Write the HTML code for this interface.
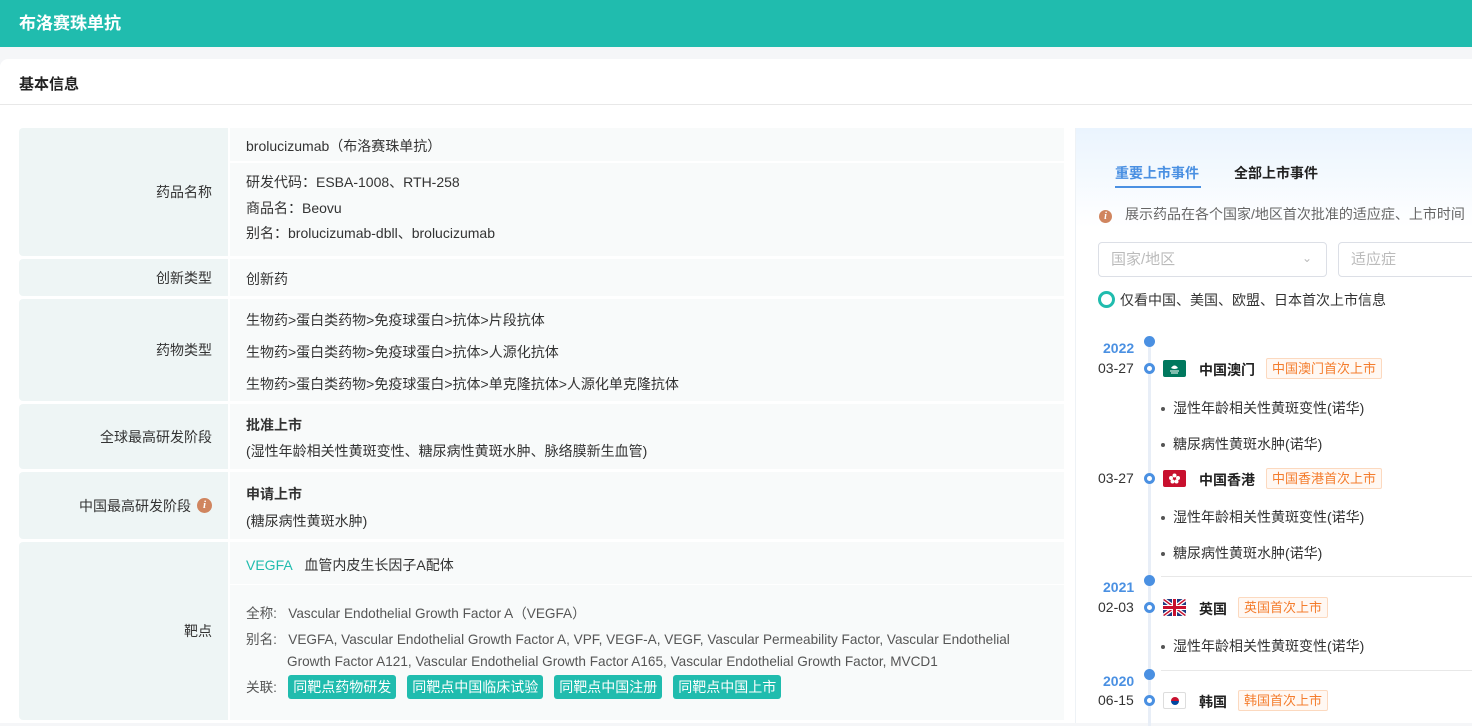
<!DOCTYPE html>
<html><head><meta charset="utf-8"><style>
*{margin:0;padding:0;box-sizing:border-box}
body{width:1472px;height:723px;overflow:hidden;background:#f5f6f8;font-family:"Liberation Sans","Noto Sans CJK SC",sans-serif;font-size:14px;color:#333;position:relative}
.hd{position:absolute;left:0;top:0;width:1472px;height:47px;background:#20bcae;color:#fff;font-weight:bold;font-size:17px;line-height:47px;padding-left:19px}
.card{position:absolute;left:0;top:59px;width:1472px;height:664px;background:#fff;border-radius:8px 0 0 0}
.st{position:absolute;left:19px;top:14px;font-weight:bold;font-size:15px;color:#222}
.ln{position:absolute;left:0;top:45px;width:1472px;height:1px;background:#e8e8e8}
.row{position:absolute;left:19px;width:1045px}
.lb{position:absolute;left:0;top:0;bottom:0;width:209px;background:#eef5f5;border-radius:4px 0 0 4px;text-align:right;padding-right:16px;display:flex;align-items:center;justify-content:flex-end;font-size:14px;color:#333}
.vl{position:absolute;left:211px;right:0;top:0;bottom:0;background:#f8fafa;padding-left:16px}
.t{position:absolute;left:16px;white-space:nowrap}
.sep{position:absolute;left:0;right:0;height:2px;background:#fff}
.info{display:inline-block;width:15px;height:15px;border-radius:50%;background:#d0855f;color:#fff;font-size:11px;font-style:italic;font-family:"Liberation Serif",serif;font-weight:bold;text-align:center;line-height:15px;margin-left:6px}
.tag{display:inline-block;background:#20bcae;color:#fff;border-radius:3px;padding:0 5px;height:24px;line-height:24px;margin-right:11px;font-size:14px}
.gray{color:#555;font-size:13.6px}
.rp{position:absolute;left:1075px;top:128px;width:397px;height:595px;background:linear-gradient(#eaf4fe,#fff 100px);border-left:1px solid #eef2f6}
.rp .a{position:absolute;white-space:nowrap}
.sel{position:absolute;height:35px;border:1px solid #dcdfe6;border-radius:4px;background:#fff;color:#bbb;font-size:15px;line-height:33px;padding-left:12px}
.vline{position:absolute;left:72px;top:218px;width:3px;height:380px;background:#e8eef7}
.dot{position:absolute;width:11px;height:11px;border-radius:50%;background:#4a90e2}
.odot{position:absolute;width:11px;height:11px;border-radius:50%;border:3px solid #4a90e2;background:#fff}
.yr{position:absolute;color:#4a90e2;font-weight:bold;font-size:14px}
.dt{position:absolute;font-size:14px;color:#333}
.cn{position:absolute;font-weight:bold;font-size:14px;color:#222}
.bd{position:absolute;border:1px solid #fcd9bf;background:#fff8f3;color:#f47c2c;font-size:13px;padding:0 5px;height:21px;line-height:19px;border-radius:2px}
.ind{position:absolute;font-size:14px;color:#333;white-space:nowrap}
.ind:before{content:"";display:inline-block;width:4px;height:4px;border-radius:50%;background:#555;margin-right:8px;vertical-align:middle}
.hr{position:absolute;left:85px;right:0;height:1px;background:#e8e8e8}
.flag{position:absolute;width:23px;height:17px;border-radius:2px;overflow:hidden}
</style></head><body>
<div class="hd">布洛赛珠单抗</div>
<div class="card">
<div class="st">基本信息</div>
<div class="ln"></div>
</div>

<div class="row" style="top:128px;height:128px"><div class="lb">药品名称</div><div class="vl">
<div class="t" style="top:8px">brolucizumab（布洛赛珠单抗）</div>
<div class="sep" style="top:33px"></div>
<div class="t" style="top:44px">研发代码：ESBA-1008、RTH-258</div>
<div class="t" style="top:70px">商品名：Beovu</div>
<div class="t" style="top:95px">别名：brolucizumab-dbll、brolucizumab</div>
</div></div>

<div class="row" style="top:259px;height:37px"><div class="lb">创新类型</div><div class="vl"><div class="t" style="top:10px">创新药</div></div></div>

<div class="row" style="top:299px;height:102px"><div class="lb">药物类型</div><div class="vl">
<div class="t" style="top:11px">生物药&gt;蛋白类药物&gt;免疫球蛋白&gt;抗体&gt;片段抗体</div>
<div class="t" style="top:43px">生物药&gt;蛋白类药物&gt;免疫球蛋白&gt;抗体&gt;人源化抗体</div>
<div class="t" style="top:75px">生物药&gt;蛋白类药物&gt;免疫球蛋白&gt;抗体&gt;单克隆抗体&gt;人源化单克隆抗体</div>
</div></div>

<div class="row" style="top:404px;height:65px"><div class="lb">全球最高研发阶段</div><div class="vl">
<div class="t" style="top:11px;font-weight:bold">批准上市</div>
<div class="t" style="top:37px">(湿性年龄相关性黄斑变性、糖尿病性黄斑水肿、脉络膜新生血管)</div>
</div></div>

<div class="row" style="top:472px;height:67px"><div class="lb">中国最高研发阶段<span class="info">i</span></div><div class="vl">
<div class="t" style="top:12px;font-weight:bold">申请上市</div>
<div class="t" style="top:39px">(糖尿病性黄斑水肿)</div>
</div></div>

<div class="row" style="top:542px;height:178px"><div class="lb">靶点</div><div class="vl">
<div class="t" style="top:13px"><span style="color:#20bcae">VEGFA</span>&nbsp;&nbsp; 血管内皮生长因子A配体</div>
<div class="sep" style="top:42px;height:1px"></div>
<div class="t gray" style="top:60px">全称:&nbsp;&nbsp; Vascular Endothelial Growth Factor A（VEGFA）</div>
<div class="t gray" style="top:86px">别名:&nbsp;&nbsp; VEGFA, Vascular Endothelial Growth Factor A, VPF, VEGF-A, VEGF, Vascular Permeability Factor, Vascular Endothelial</div>
<div class="t gray" style="top:112px;left:57px">Growth Factor A121, Vascular Endothelial Growth Factor A165, Vascular Endothelial Growth Factor, MVCD1</div>
<div class="t gray" style="top:133px;line-height:24px">关联:&nbsp;&nbsp; <span class="tag">同靶点药物研发</span><span class="tag">同靶点中国临床试验</span><span class="tag">同靶点中国注册</span><span class="tag">同靶点中国上市</span></div>
</div></div>

<div class="rp">
<div class="a" style="left:39px;top:35px;color:#4a90e2;font-weight:bold">重要上市事件</div>
<div style="position:absolute;left:39px;top:58px;width:86px;height:2px;background:#4a90e2"></div>
<div class="a" style="left:158px;top:35px;font-weight:bold;color:#222">全部上市事件</div>
<div class="a" style="left:23px;top:76px"><span class="info" style="margin:0 13px 0 0;width:13px;height:13px;line-height:13px;font-size:10px">i</span><span style="color:#666;font-size:14px">展示药品在各个国家/地区首次批准的适应症、上市时间</span></div>
<div class="sel" style="left:22px;top:114px;width:229px">国家/地区<span style="position:absolute;right:14px;top:-1px;color:#bbb;font-size:12px">&#8964;</span></div>
<div class="sel" style="left:262px;top:114px;width:150px">适应症</div>
<div style="position:absolute;left:22px;top:163px;width:17px;height:17px;border-radius:50%;border:3px solid #20bcae"></div>
<div class="a" style="left:44px;top:162px;font-size:14px">仅看中国、美国、欧盟、日本首次上市信息</div>
<div class="vline"></div>
<div class="dot" style="left:68px;top:208px"></div>
<div class="yr" style="left:27px;top:212px">2022</div>
<div class="dt" style="left:22px;top:232px">03-27</div><div class="odot" style="left:68px;top:235px"></div>
<div class="flag" style="left:87px;top:232px;background:#00785e"><svg width="23" height="17"><path d="M8 8Q11.5 3 15 8Q11.5 10 8 8Z" fill="#fff"/><path d="M7 11H16M8 13H15" stroke="#fff" stroke-width="1"/></svg></div>
<div class="cn" style="left:123px;top:232px">中国澳门</div><div class="bd" style="left:190px;top:230px">中国澳门首次上市</div>
<div class="ind" style="left:85px;top:270px">湿性年龄相关性黄斑变性(诺华)</div>
<div class="ind" style="left:85px;top:306px">糖尿病性黄斑水肿(诺华)</div>
<div class="dt" style="left:22px;top:342px">03-27</div><div class="odot" style="left:68px;top:345px"></div>
<div class="flag" style="left:87px;top:342px;background:#c8102e"><svg width="23" height="17"><g fill="#fff"><circle cx="11.5" cy="5.5" r="2"/><circle cx="8" cy="8" r="2"/><circle cx="15" cy="8" r="2"/><circle cx="9.5" cy="11.5" r="2"/><circle cx="13.5" cy="11.5" r="2"/></g></svg></div>
<div class="cn" style="left:123px;top:342px">中国香港</div><div class="bd" style="left:190px;top:340px">中国香港首次上市</div>
<div class="ind" style="left:85px;top:379px">湿性年龄相关性黄斑变性(诺华)</div>
<div class="ind" style="left:85px;top:415px">糖尿病性黄斑水肿(诺华)</div>
<div class="hr" style="top:448px"></div>
<div class="dot" style="left:68px;top:447px"></div>
<div class="yr" style="left:27px;top:451px">2021</div>
<div class="dt" style="left:22px;top:471px">02-03</div><div class="odot" style="left:68px;top:474px"></div>
<div class="flag" style="left:87px;top:471px;background:#1f3a80"><svg width="23" height="17"><path d="M0 0L23 17M23 0L0 17" stroke="#fff" stroke-width="4"/><path d="M0 0L23 17M23 0L0 17" stroke="#c8102e" stroke-width="1.5"/><path d="M11.5 0V17M0 8.5H23" stroke="#fff" stroke-width="5"/><path d="M11.5 0V17M0 8.5H23" stroke="#c8102e" stroke-width="3"/></svg></div>
<div class="cn" style="left:123px;top:471px">英国</div><div class="bd" style="left:162px;top:469px">英国首次上市</div>
<div class="ind" style="left:85px;top:508px">湿性年龄相关性黄斑变性(诺华)</div>
<div class="hr" style="top:542px"></div>
<div class="dot" style="left:68px;top:541px"></div>
<div class="yr" style="left:27px;top:545px">2020</div>
<div class="dt" style="left:22px;top:564px">06-15</div><div class="odot" style="left:68px;top:567px"></div>
<div class="flag" style="left:87px;top:564px;background:#fff;border:1px solid #ddd"><div style="position:absolute;left:7px;top:4px;width:8px;height:8px;border-radius:50%;background:linear-gradient(#c8102e 50%,#0047a0 50%)"></div></div>
<div class="cn" style="left:123px;top:564px">韩国</div><div class="bd" style="left:162px;top:562px">韩国首次上市</div>
</div>
</body></html>
